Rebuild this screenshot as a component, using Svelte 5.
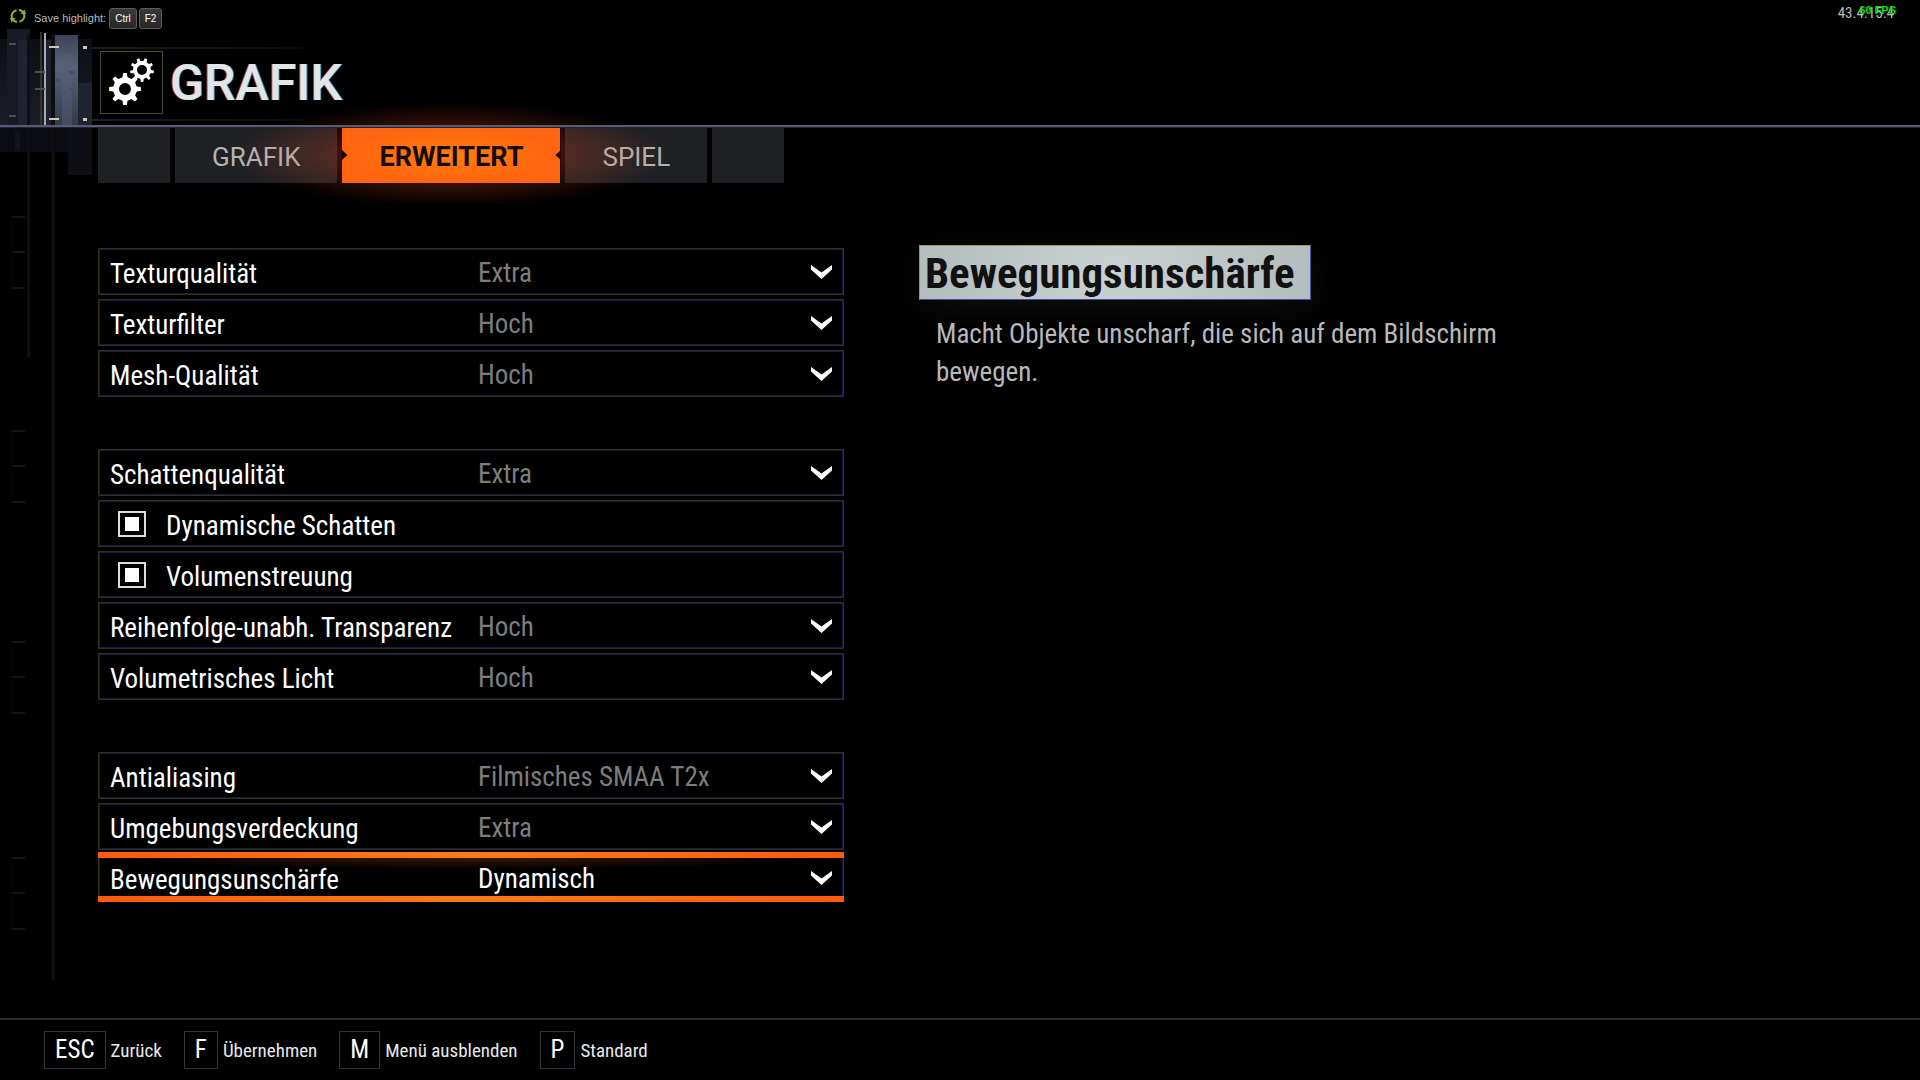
<script>
  const tabs = ['GRAFIK', 'ERWEITERT', 'SPIEL'];
  let activeTab = $state('ERWEITERT');

  const groups = [
    [
      { id: 'texture', label: 'Texturqualität', value: 'Extra' },
      { id: 'filter', label: 'Texturfilter', value: 'Hoch' },
      { id: 'mesh', label: 'Mesh-Qualität', value: 'Hoch' },
    ],
    [
      { id: 'shadow', label: 'Schattenqualität', value: 'Extra' },
      { id: 'dynshadow', label: 'Dynamische Schatten', checked: true },
      { id: 'scatter', label: 'Volumenstreuung', checked: true },
      { id: 'oit', label: 'Reihenfolge-unabh. Transparenz', value: 'Hoch' },
      { id: 'light', label: 'Volumetrisches Licht', value: 'Hoch' },
    ],
    [
      { id: 'aa', label: 'Antialiasing', value: 'Filmisches SMAA T2x' },
      { id: 'ao', label: 'Umgebungsverdeckung', value: 'Extra' },
      { id: 'blur', label: 'Bewegungsunschärfe', value: 'Dynamisch' },
    ],
  ];
  let selected = $state('blur');

  const keys = [
    { key: 'ESC', label: 'Zurück' },
    { key: 'F', label: 'Übernehmen' },
    { key: 'M', label: 'Menü ausblenden' },
    { key: 'P', label: 'Standard' },
  ];

  const ticks = [216, 430, 641, 857];

  // gear outline with a round hole, use with fill-rule evenodd
  const gear = (cx, cy, outer, root, hole, teeth, turn) => {
    const step = (Math.PI * 2) / teeth;
    const pts = [];
    for (let i = 0; i < teeth; i++) {
      const a = i * step + turn;
      [
        [root, -0.27],
        [outer, -0.15],
        [outer, 0.15],
        [root, 0.27],
      ].forEach(([r, k]) => {
        const x = cx + r * Math.cos(a + k * step);
        const y = cy + r * Math.sin(a + k * step);
        pts.push(`${x.toFixed(2)} ${y.toFixed(2)}`);
      });
    }
    return `M${pts.join('L')}ZM${cx - hole} ${cy}a${hole} ${hole} 0 1 0 ${hole * 2} 0a${hole} ${hole} 0 1 0 ${-hole * 2} 0Z`;
  };
</script>

<div class="screen">
  <svg class="deco" width="320" height="1000" aria-hidden="true">
    <defs>
      <linearGradient id="beam" x1="0" y1="0" x2="0" y2="1">
        <stop offset="0" stop-color="#3c4358" />
        <stop offset="0.35" stop-color="#5a6278" />
        <stop offset="1" stop-color="#343a4c" />
      </linearGradient>
      <linearGradient id="dim" x1="0" y1="0" x2="0" y2="1">
        <stop offset="0" stop-color="#0c0e14" />
        <stop offset="1" stop-color="#1b1e28" />
      </linearGradient>
      <linearGradient id="fade" x1="0" y1="0" x2="1" y2="0">
        <stop offset="0" stop-color="#1c1d22" />
        <stop offset="1" stop-color="#0a0a0d" />
      </linearGradient>
    </defs>
    <rect x="0" y="39" width="92" height="86" fill="url(#dim)" />
    <rect x="7" y="29" width="23" height="96" fill="#171a24" />
    <rect x="18" y="40" width="10" height="85" fill="#1f2330" />
    <rect x="44" y="40" width="34" height="85" fill="#1d212e" />
    <rect x="55" y="35" width="23" height="90" fill="url(#beam)" />
    <rect x="62" y="54" width="10" height="71" fill="#565e76" opacity="0.5" />
    <rect x="78" y="83" width="14" height="42" fill="#20242f" />
    <rect x="40" y="32" width="2" height="93" fill="#37351f" />
    <rect x="44" y="33" width="2" height="92" fill="#a3a9b8" />
    <rect x="0" y="127" width="78" height="25" fill="#0b0c11" />
    <rect x="15" y="131" width="5" height="20" fill="#12141b" />
    <rect x="68" y="127" width="24" height="48" fill="#0e0f14" />
    <rect x="27" y="34" width="3" height="323" fill="#0d0e16" />
    <rect x="51" y="34" width="2" height="946" fill="#110e06" />
    <rect x="53" y="34" width="2" height="946" fill="#0b0d17" />
    <g fill="#c9c9b4">
      <rect x="49" y="46" width="10" height="2" />
      <rect x="49" y="118" width="10" height="2" />
      <rect x="83" y="46" width="4" height="3" />
      <rect x="83" y="118" width="4" height="3" />
    </g>
    <g fill="#4b5060">
      <rect x="9" y="43" width="7" height="2" />
      <rect x="9" y="115" width="7" height="2" />
      <rect x="35" y="71" width="10" height="2" />
      <rect x="35" y="88" width="10" height="2" />
      <rect x="69" y="71" width="5" height="3" />
      <rect x="69" y="88" width="5" height="3" />
      <rect x="56" y="79" width="4" height="3" />
    </g>
    <rect x="92" y="47" width="213" height="2" fill="url(#fade)" />
    <rect x="92" y="119" width="213" height="2" fill="url(#fade)" />
    {#each ticks as y}
      <g fill="#131410">
        <rect x="11" {y} width="14" height="2" />
        <rect x="11" y={y + 35} width="14" height="2" />
        <rect x="11" y={y + 71} width="14" height="2" />
      </g>
      <rect x="11" {y} width="1" height="72" fill="#060606" />
    {/each}
  </svg>

  <div class="overlay">
    <svg width="16" height="16" viewBox="0 0 16 16" fill="none" stroke="#86b817" stroke-width="2" aria-hidden="true">
      <path d="M2.500 11A6 6 0 0 1 6.500 2.200M9 2A6 6 0 0 1 14 6M13.500 5A6 6 0 0 1 9.500 13.800M7 14A6 6 0 0 1 2 10" />
      <path d="M0 10h5.500l-4 4.500zM16 6h-5.500l4-4.500z" fill="#86b817" stroke="none" />
    </svg>
    <span>Save highlight:</span>
    <kbd>Ctrl</kbd>
    <kbd>F2</kbd>
    <div class="stats">
      <span class="version">43.4.15.4</span>
      <span class="fps">60 FPS</span>
    </div>
  </div>

  <header>
    <div class="icon">
      <svg width="60" height="60" viewBox="0 0 60 60" fill="#fff" fill-rule="evenodd" aria-hidden="true">
        <path d={gear(24, 37, 16, 12, 6, 8, 0)} />
        <path d={gear(41, 18, 12, 9, 5, 9, 0.17)} />
      </svg>
    </div>
    <h1>GRAFIK</h1>
  </header>

  <nav>
    <div class="stub"></div>
    {#each tabs as tab}
      <button class:active={tab === activeTab} onclick={() => (activeTab = tab)}>{tab}</button>
    {/each}
    <div class="stub"></div>
  </nav>

  <main>
    <form>
      {#each groups as group}
        <div class="group">
          {#each group as item}
            {#if item.value}
              <div class="row" class:selected={item.id === selected}>
                <label for={item.id}>{item.label}</label>
                <select id={item.id} onfocus={() => (selected = item.id)}>
                  <option>{item.value}</option>
                </select>
                <svg class="chevron" width="21" height="14" viewBox="0 0 21 14" aria-hidden="true">
                  <path d="M0 0L10.500 7.500L21 0V4.500L10.500 14L0 4.500Z" fill="#fff" />
                </svg>
              </div>
            {:else}
              <div class="row check">
                <input type="checkbox" id={item.id} bind:checked={item.checked} />
                <label for={item.id}>{item.label}</label>
              </div>
            {/if}
          {/each}
        </div>
      {/each}
    </form>

    <section>
      <h2>Bewegungsunschärfe</h2>
      <p>Macht Objekte unscharf, die sich auf dem Bildschirm bewegen.</p>
    </section>
  </main>

  <footer>
    {#each keys as { key, label }}
      <button><span class="key">{key}</span><span>{label}</span></button>
    {/each}
  </footer>
</div>

<style>
  :global(body) {
    background: #000;
  }

  .screen {
    --narrow: 'Roboto Condensed', 'Liberation Sans Narrow', sans-serif;
    position: relative;
    display: flex;
    flex-direction: column;
    min-height: 100vh;
    background: #000;
    color: #fff;
    font-family: var(--narrow);
    overflow: hidden;
  }

  .deco {
    position: absolute;
    left: 0;
    top: 0;
  }

  .overlay {
    position: relative;
    display: flex;
    align-items: center;
    height: 36px;
    padding-left: 10px;
    box-sizing: border-box;
    font: 11px 'Liberation Sans', sans-serif;
    color: #b9b9b9;
  }

  .overlay > span {
    margin: 0 3px 0 8px;
  }

  .overlay svg {
    margin-bottom: 4px;
  }

  kbd {
    height: 21px;
    margin-right: 2px;
    padding: 0 5px;
    box-sizing: border-box;
    border: 1px solid #5c5c5c;
    border-radius: 3px;
    background: linear-gradient(#3a3a3a, #262626);
    color: #fff;
    font: 10px/19px 'Liberation Sans', sans-serif;
  }

  .stats {
    position: relative;
    margin: 0 26px 10px auto;
  }

  .version {
    color: #bbb;
    font: 15px var(--narrow);
  }

  .fps {
    position: absolute;
    right: -2px;
    top: 0;
    color: #00e010;
    font: bold 11px 'Liberation Sans', sans-serif;
    white-space: nowrap;
  }

  header {
    position: relative;
    display: flex;
    align-items: flex-start;
    gap: 7px;
    height: 91px;
    padding: 15px 100px 0;
    box-sizing: border-box;
    border-bottom: 2px solid #5e5e5a;
    box-shadow: 0 1px 0 #1c1c5c;
    z-index: 2;
  }

  .icon {
    width: 63px;
    height: 63px;
    box-sizing: border-box;
    border: 1px solid #4a4a28;
    background: #000;
  }

  h1 {
    margin: 0;
    font: 500 50px/64px Roboto, sans-serif;
    color: #dfe6e8;
    text-shadow: -1px 0 #b0405a, 1px 0 #3a8ab0;
  }

  nav {
    position: relative;
    display: flex;
    gap: 5px;
    height: 56px;
    padding-left: 98px;
    z-index: 1;
  }

  .stub {
    width: 72px;
    background: #1f2024;
  }

  nav button {
    padding: 4px 37px 0;
    border: none;
    background: #1f2024;
    color: #b4b4b4;
    font: 26px Roboto, sans-serif;
    cursor: pointer;
  }

  nav button.active {
    position: relative;
    background: radial-gradient(closest-side, #ff7d0c, #ff6410);
    color: #160c04;
    font-size: 27px;
    font-weight: bold;
  }

  nav button.active::before {
    content: '';
    position: absolute;
    inset: -24px -110px;
    background: radial-gradient(closest-side, rgba(255, 70, 30, 0.36) 30%, rgba(255, 80, 40, 0.14) 70%, transparent);
    clip-path: polygon(0 0, 100% 0, 100% 100%, 0 100%, 0 24px, 110px 24px, 110px calc(100% - 24px), calc(100% - 110px) calc(100% - 24px), calc(100% - 110px) 24px, 0 24px);
    pointer-events: none;
  }

  nav button.active::after {
    content: '';
    position: absolute;
    inset: 0 -1px;
    background: #1c0a04;
    clip-path: polygon(0 40%, 6px 50%, 0 60%, 0 100%, 100% 100%, 100% 60%, calc(100% - 6px) 50%, 100% 40%, 100% 100%, 0 100%);
  }

  main {
    position: relative;
    flex: 1;
    display: grid;
    grid-template-columns: 746fr 1001fr;
    align-items: start;
    gap: 75px;
    padding: 65px 0 0 98px;
  }

  form {
    display: flex;
    flex-direction: column;
    gap: 52px;
  }

  .group {
    display: flex;
    flex-direction: column;
    gap: 4px;
  }

  .row {
    position: relative;
    display: grid;
    grid-template-columns: 368px 1fr;
    align-items: center;
    height: 47px;
    padding-left: 11px;
    box-sizing: border-box;
    border: 1px solid #33331a;
    box-shadow: inset 0 0 0 1px #18184a;
    font-size: 27px;
  }

  .row label {
    padding-top: 5px;
    white-space: nowrap;
  }

  select {
    height: 100%;
    padding: 2px 44px 0 0;
    border: none;
    appearance: none;
    background: none;
    color: #7d7d7d;
    font: 27px var(--narrow);
    outline: none;
  }

  .chevron {
    position: absolute;
    right: 11px;
    top: 16px;
    pointer-events: none;
  }

  .check {
    grid-template-columns: 28px 1fr;
    gap: 20px;
    padding-left: 19px;
  }

  input {
    appearance: none;
    display: grid;
    place-content: center;
    width: 28px;
    height: 26px;
    margin: 0;
    border: 2px solid #ddd;
  }

  input:checked::before {
    content: '';
    width: 14px;
    height: 14px;
    background: #fff;
  }

  .selected::before,
  .selected::after {
    content: '';
    position: absolute;
    left: -1px;
    right: -1px;
    height: 6px;
    background: linear-gradient(90deg, #ff5a0c, #ff7a14, #ff5a0c);
  }

  .selected::before {
    top: -3px;
  }

  .selected::after {
    bottom: -2px;
    box-shadow: 0 4px 12px -4px rgba(255, 100, 20, 0.3);
  }

  .selected {
    background: radial-gradient(50% 14px at 50% 0, #4a1c04, transparent);
  }

  .selected select {
    color: #fff;
  }

  section {
    margin-top: -3px;
  }

  h2 {
    width: fit-content;
    margin: 0;
    padding: 1px 15px 0 5px;
    border: 1px solid;
    border-color: #9a9a50 #4a5aa8 #4a4a9a #9a9a50;
    background: radial-gradient(circle, #c9d1d3, #b4bcbe);
    box-shadow: 0 8px 40px rgba(200, 210, 215, 0.08);
    color: #111;
    font: bold 43px/52px var(--narrow);
  }

  p {
    max-width: 600px;
    margin: 15px 0 0 17px;
    color: #b8b8b8;
    font-size: 27px;
    line-height: 38px;
  }

  footer {
    display: flex;
    align-items: center;
    gap: 22px;
    height: 62px;
    padding: 0 44px;
    box-sizing: border-box;
    border-top: 2px solid #2e2e30;
  }

  footer button {
    display: flex;
    align-items: center;
    gap: 5px;
    padding: 0;
    border: none;
    background: none;
    color: #e8e8e8;
    font: 19px var(--narrow);
    cursor: pointer;
  }

  .key {
    padding: 0 10px;
    border: 1px solid #33333f;
    color: #fff;
    font-size: 25px;
    line-height: 36px;
  }
</style>
